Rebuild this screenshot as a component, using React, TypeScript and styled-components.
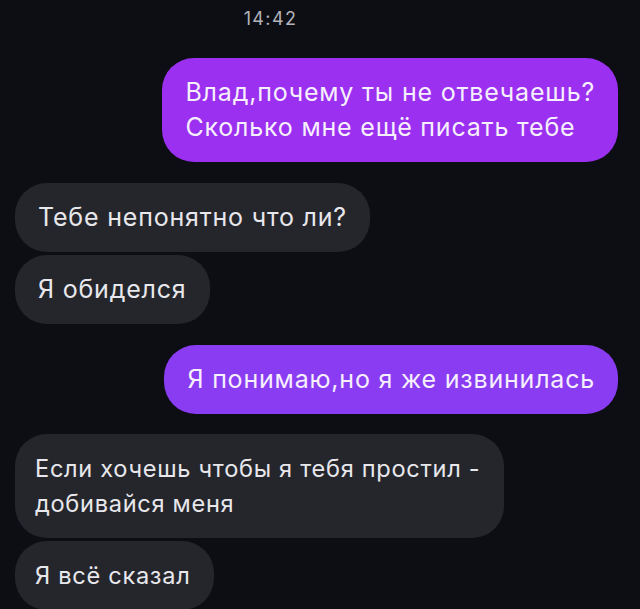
import React from "react";
import styled, { createGlobalStyle } from "styled-components";

const GlobalStyle = createGlobalStyle`
  html, body {
    margin: 0;
    padding: 0;
    background: #0d0e14;
  }
`;

const Screen = styled.div`
  width: 640px;
  height: 609px;
  overflow: hidden;
  background: #0d0e14;
  font-family: Inter, "Noto Sans", sans-serif;
  display: flex;
  flex-direction: column;
  padding: 8px 22px 0 15px;
  box-sizing: border-box;
`;

const Time = styled.div`
  align-self: center;
  margin-left: -92px;
  font-size: 18px;
  line-height: 22px;
  letter-spacing: 1.4px;
  color: #b3b3bb;
  margin-bottom: 28px;
`;

const Group = styled.div<{ $gap: number }>`
  display: flex;
  flex-direction: column;
  gap: 3px;
  margin-bottom: ${(p) => p.$gap}px;
`;

const Bubble = styled.div<{ $out?: boolean; $tone?: string; $small?: boolean }>`
  align-self: ${(p) => (p.$out ? "flex-end" : "flex-start")};
  background: ${(p) => p.$tone || "#25262c"};
  color: ${(p) => (p.$out ? "#f6effc" : "#e8e8ec")};
  border-radius: 32px;
  font-size: ${(p) => (p.$small ? "23.6px" : "25px")};
  line-height: 35px;
  letter-spacing: ${(p) => (p.$small ? "0.7px" : "0.8px")};
  padding: 17px ${(p) => (p.$small ? "24px 17px 20px" : "23px 17px 23px")};
  white-space: pre;
`;

export default function App() {
  return (
    <>
      <GlobalStyle />
      <Screen>
        <Time>14:42</Time>
        <Group $gap={21}>
          <Bubble $out $tone="#9b30f1">
            {"Влад,почему ты не отвечаешь?\nСколько мне ещё писать тебе"}
          </Bubble>
        </Group>
        <Group $gap={21}>
          <Bubble>Тебе непонятно что ли?</Bubble>
          <Bubble>Я обиделся</Bubble>
        </Group>
        <Group $gap={20}>
          <Bubble $out $tone="#8a3cf3">
            Я понимаю,но я же извинилась
          </Bubble>
        </Group>
        <Group $gap={0}>
          <Bubble $small>{"Если хочешь чтобы я тебя простил -\nдобивайся меня"}</Bubble>
          <Bubble $small>Я всё сказал</Bubble>
        </Group>
      </Screen>
    </>
  );
}
